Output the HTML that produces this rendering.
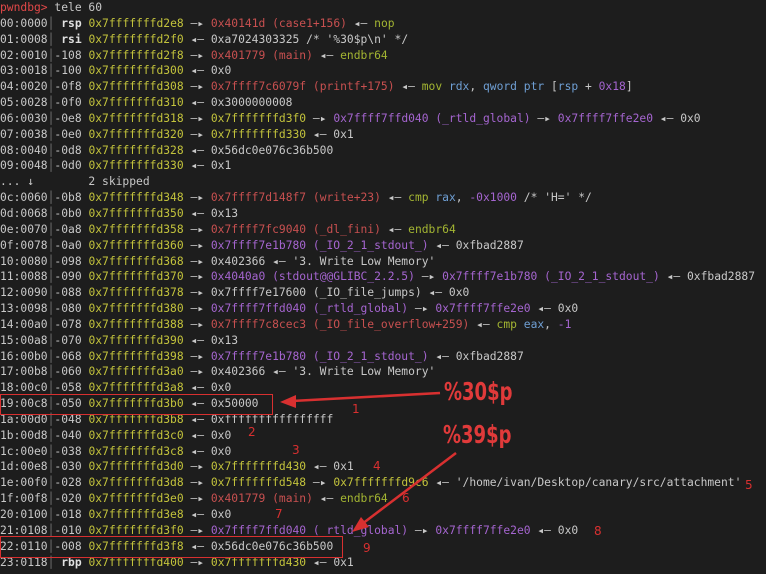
<!DOCTYPE html>
<html><head><meta charset="utf-8"><style>
html,body{margin:0;padding:0;background:#1d1d1d;width:766px;height:574px;overflow:hidden}
pre{position:absolute;left:0;top:0;margin:0;font-family:"DejaVu Sans Mono","Liberation Mono",monospace;font-size:11.3px;line-height:15.85px;color:#c8c8c8;white-space:pre}
.y{color:#c3c33c}.r{color:#c85050}.g{color:#a3b532}.b{color:#6f9fd4}.p{color:#a565d0}.w{color:#e0e0e0;font-weight:bold}.s{color:#777}.pr{color:#e04848}
.box{position:absolute;border:1.5px solid #d83030}
.big{position:absolute;font-family:"DejaVu Sans","Liberation Sans",sans-serif;font-weight:bold;font-size:25px;color:#e03a3a;transform:scaleX(0.72);transform-origin:0 0}
.n{position:absolute;font-family:"DejaVu Sans",sans-serif;font-size:12px;color:#d83030}
</style></head><body>
<pre><span class="pr">pwndbg&gt;</span> tele 60
00:0000<span class="s">│</span> <span class="w">rsp</span> <span class="y">0x7fffffffd2e8</span> —▸ <span class="r">0x40141d (case1+156)</span> ◂— <span class="g">nop</span>
01:0008<span class="s">│</span> <span class="w">rsi</span> <span class="y">0x7fffffffd2f0</span> ◂— 0xa7024303325 /* '%30$p\n' */
02:0010<span class="s">│</span>-108 <span class="y">0x7fffffffd2f8</span> —▸ <span class="r">0x401779 (main)</span> ◂— <span class="g">endbr64</span>
03:0018<span class="s">│</span>-100 <span class="y">0x7fffffffd300</span> ◂— 0x0
04:0020<span class="s">│</span>-0f8 <span class="y">0x7fffffffd308</span> —▸ <span class="r">0x7ffff7c6079f (printf+175)</span> ◂— <span class="g">mov</span> <span class="b">rdx</span>, <span class="b">qword ptr</span> [<span class="b">rsp</span> + <span class="p">0x18</span>]
05:0028<span class="s">│</span>-0f0 <span class="y">0x7fffffffd310</span> ◂— 0x3000000008
06:0030<span class="s">│</span>-0e8 <span class="y">0x7fffffffd318</span> —▸ <span class="y">0x7fffffffd3f0</span> —▸ <span class="p">0x7ffff7ffd040 (_rtld_global)</span> —▸ <span class="p">0x7ffff7ffe2e0</span> ◂— 0x0
07:0038<span class="s">│</span>-0e0 <span class="y">0x7fffffffd320</span> —▸ <span class="y">0x7fffffffd330</span> ◂— 0x1
08:0040<span class="s">│</span>-0d8 <span class="y">0x7fffffffd328</span> ◂— 0x56dc0e076c36b500
09:0048<span class="s">│</span>-0d0 <span class="y">0x7fffffffd330</span> ◂— 0x1
... ↓        2 skipped
0c:0060<span class="s">│</span>-0b8 <span class="y">0x7fffffffd348</span> —▸ <span class="r">0x7ffff7d148f7 (write+23)</span> ◂— <span class="g">cmp</span> <span class="b">rax</span>, <span class="p">-0x1000</span> /* 'H=' */
0d:0068<span class="s">│</span>-0b0 <span class="y">0x7fffffffd350</span> ◂— 0x13
0e:0070<span class="s">│</span>-0a8 <span class="y">0x7fffffffd358</span> —▸ <span class="r">0x7ffff7fc9040 (_dl_fini)</span> ◂— <span class="g">endbr64</span>
0f:0078<span class="s">│</span>-0a0 <span class="y">0x7fffffffd360</span> —▸ <span class="p">0x7ffff7e1b780 (_IO_2_1_stdout_)</span> ◂— 0xfbad2887
10:0080<span class="s">│</span>-098 <span class="y">0x7fffffffd368</span> —▸ 0x402366 ◂— '3. Write Low Memory'
11:0088<span class="s">│</span>-090 <span class="y">0x7fffffffd370</span> —▸ <span class="p">0x4040a0 (stdout@@GLIBC_2.2.5)</span> —▸ <span class="p">0x7ffff7e1b780 (_IO_2_1_stdout_)</span> ◂— 0xfbad2887
12:0090<span class="s">│</span>-088 <span class="y">0x7fffffffd378</span> —▸ 0x7ffff7e17600 (_IO_file_jumps) ◂— 0x0
13:0098<span class="s">│</span>-080 <span class="y">0x7fffffffd380</span> —▸ <span class="p">0x7ffff7ffd040 (_rtld_global)</span> —▸ <span class="p">0x7ffff7ffe2e0</span> ◂— 0x0
14:00a0<span class="s">│</span>-078 <span class="y">0x7fffffffd388</span> —▸ <span class="r">0x7ffff7c8cec3 (_IO_file_overflow+259)</span> ◂— <span class="g">cmp</span> <span class="b">eax</span>, <span class="p">-1</span>
15:00a8<span class="s">│</span>-070 <span class="y">0x7fffffffd390</span> ◂— 0x13
16:00b0<span class="s">│</span>-068 <span class="y">0x7fffffffd398</span> —▸ <span class="p">0x7ffff7e1b780 (_IO_2_1_stdout_)</span> ◂— 0xfbad2887
17:00b8<span class="s">│</span>-060 <span class="y">0x7fffffffd3a0</span> —▸ 0x402366 ◂— '3. Write Low Memory'
18:00c0<span class="s">│</span>-058 <span class="y">0x7fffffffd3a8</span> ◂— 0x0
19:00c8<span class="s">│</span>-050 <span class="y">0x7fffffffd3b0</span> ◂— 0x50000
1a:00d0<span class="s">│</span>-048 <span class="y">0x7fffffffd3b8</span> ◂— 0xffffffffffffffff
1b:00d8<span class="s">│</span>-040 <span class="y">0x7fffffffd3c0</span> ◂— 0x0
1c:00e0<span class="s">│</span>-038 <span class="y">0x7fffffffd3c8</span> ◂— 0x0
1d:00e8<span class="s">│</span>-030 <span class="y">0x7fffffffd3d0</span> —▸ <span class="y">0x7fffffffd430</span> ◂— 0x1
1e:00f0<span class="s">│</span>-028 <span class="y">0x7fffffffd3d8</span> —▸ <span class="y">0x7fffffffd548</span> —▸ <span class="y">0x7fffffffd9c6</span> ◂— '/home/ivan/Desktop/canary/src/attachment'
1f:00f8<span class="s">│</span>-020 <span class="y">0x7fffffffd3e0</span> —▸ <span class="r">0x401779 (main)</span> ◂— <span class="g">endbr64</span>
20:0100<span class="s">│</span>-018 <span class="y">0x7fffffffd3e8</span> ◂— 0x0
21:0108<span class="s">│</span>-010 <span class="y">0x7fffffffd3f0</span> —▸ <span class="p">0x7ffff7ffd040 (_rtld_global)</span> —▸ <span class="p">0x7ffff7ffe2e0</span> ◂— 0x0
22:0110<span class="s">│</span>-008 <span class="y">0x7fffffffd3f8</span> ◂— 0x56dc0e076c36b500
23:0118<span class="s">│</span> <span class="w">rbp</span> <span class="y">0x7fffffffd400</span> —▸ <span class="y">0x7fffffffd430</span> ◂— 0x1
</pre>
<div class="box" style="left:0;top:394px;width:271px;height:19px"></div>
<div class="box" style="left:0;top:536px;width:341px;height:20px"></div>
<svg style="position:absolute;left:0;top:0" width="766" height="574">
<line x1="440" y1="393" x2="292" y2="401" stroke="#d83030" stroke-width="2.5"/>
<polygon points="280,402 296,395 296,408" fill="#d83030"/>
<line x1="456" y1="453" x2="362" y2="524" stroke="#d83030" stroke-width="2.5"/>
<polygon points="352,532 361,517 369,527" fill="#d83030"/>
</svg>
<div class="big" style="left:444px;top:377px">%30$p</div>
<div class="big" style="left:443px;top:420px">%39$p</div>
<div class="n" style="left:352px;top:402px">1</div>
<div class="n" style="left:248px;top:425px">2</div>
<div class="n" style="left:292px;top:443px">3</div>
<div class="n" style="left:373px;top:459px">4</div>
<div class="n" style="left:745px;top:478px">5</div>
<div class="n" style="left:402px;top:491px">6</div>
<div class="n" style="left:275px;top:507px">7</div>
<div class="n" style="left:594px;top:524px">8</div>
<div class="n" style="left:363px;top:541px">9</div>
</body></html>
